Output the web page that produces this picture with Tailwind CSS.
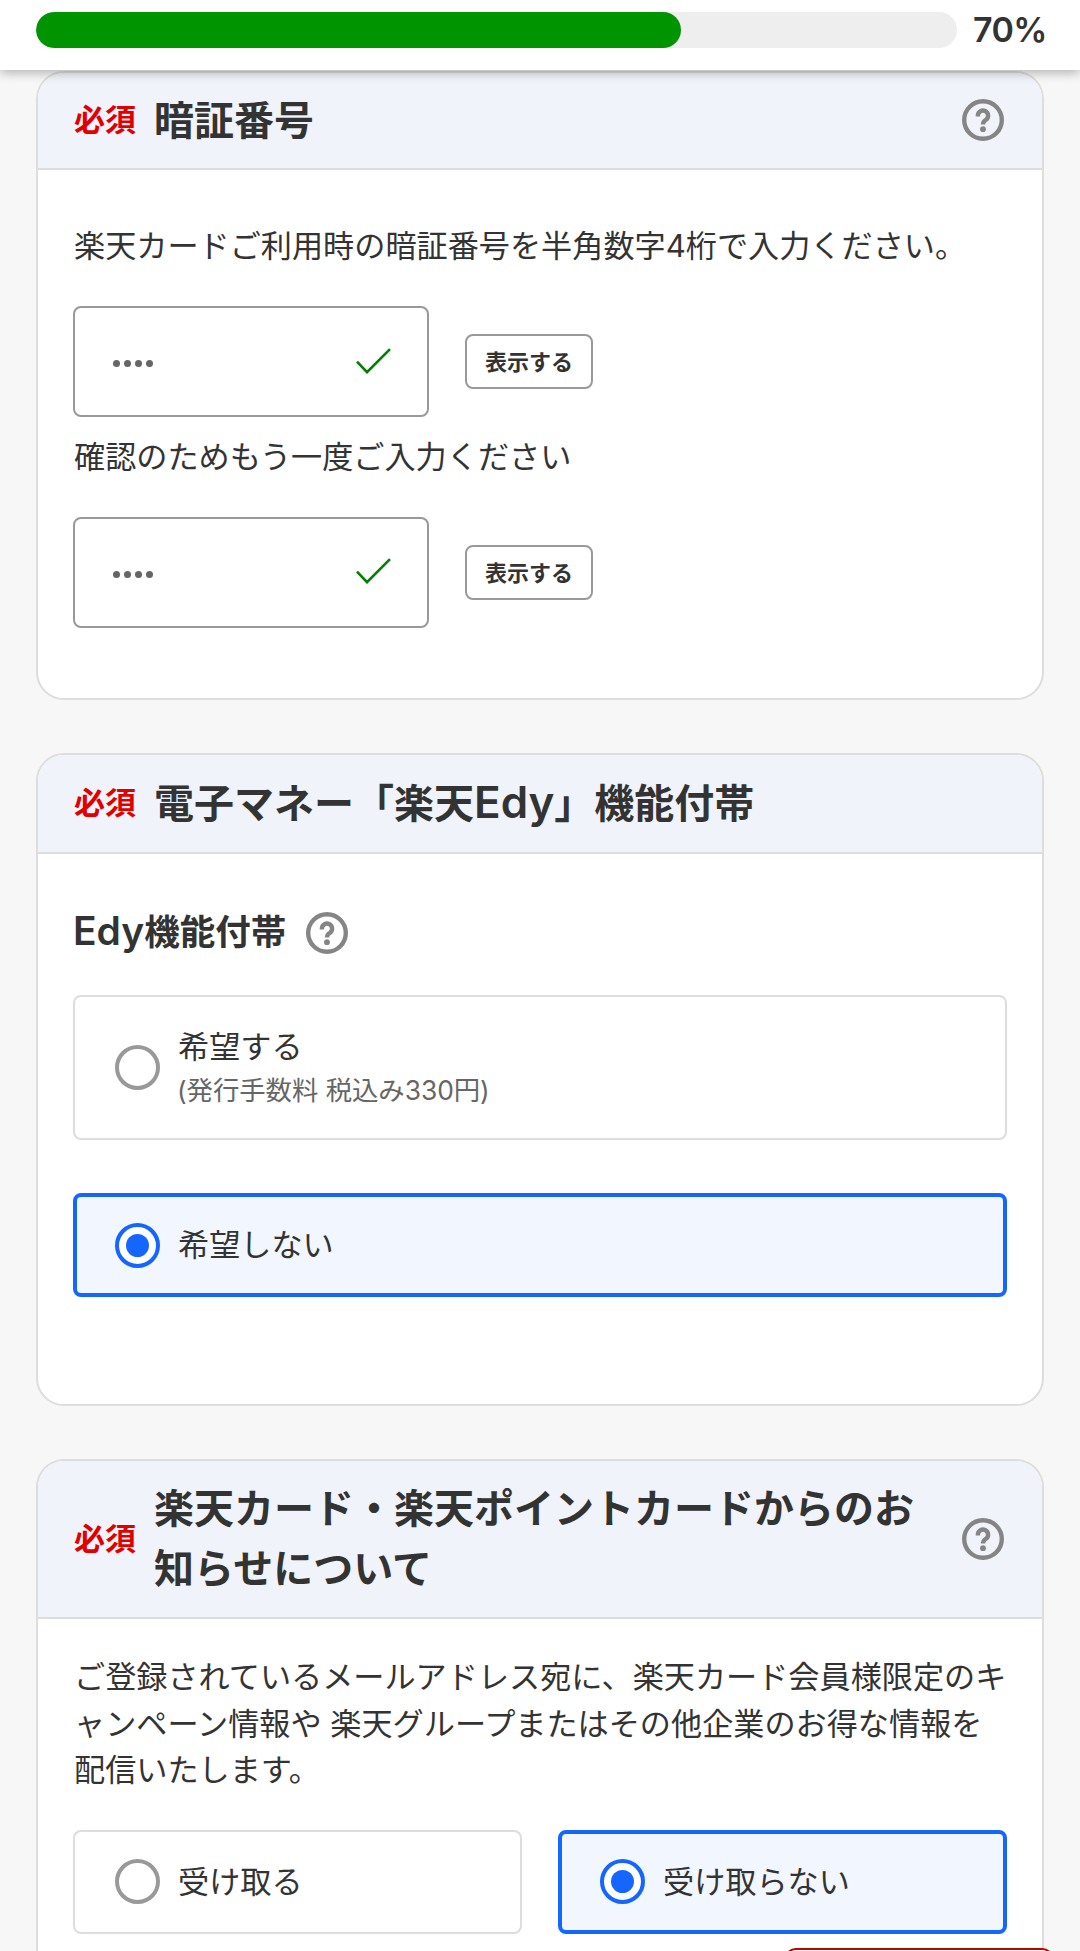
<!DOCTYPE html>
<html lang="ja">
  <head>
    <meta charset="UTF-8" />
    <meta name="viewport" content="width=device-width, initial-scale=1.0" />
    <title>楽天カード お申し込み</title>
    <script src="https://cdn.jsdelivr.net/npm/@tailwindcss/browser@4"></script>
    <style>
      body {
        font-family: 'Inter', 'Noto Sans CJK JP', sans-serif;
      }
    </style>
  </head>
  <body class="bg-[#f7f7f7] text-[#333] h-[1951px] overflow-hidden">
    <svg class="hidden">
      <symbol id="help" viewBox="0 0 42 42">
        <circle cx="21" cy="21" r="18.8" fill="none" stroke="#858585" stroke-width="4.4" />
        <path d="M15.9 17.4v-.8a5.1 5.1 0 1 1 8.4 3.9c-1.9 1.4-3.3 2-3.3 4.9" fill="none" stroke="#858585" stroke-width="4.4" />
        <circle cx="21" cy="30.2" r="2.9" fill="#858585" />
      </symbol>
      <symbol id="check" viewBox="0 0 35 26">
        <path d="M1 13.6l10 10.6L34 1.2" fill="none" stroke="#008000" stroke-width="2.6" />
      </symbol>
    </svg>

    <header class="relative z-10 bg-white h-[70px] px-9 pt-3 flex items-start shadow-[0_3px_10px_rgba(0,0,0,0.28)]">
      <div class="w-[921px] h-9 shrink-0 rounded-full bg-[#eee] overflow-hidden">
        <div class="h-full rounded-full bg-[#009500]" style="width: 70%"></div>
      </div>
      <p class="ml-4 text-[34px] leading-9 font-semibold tracking-[-0.6px]">70%</p>
    </header>

    <main class="px-9 pt-px">
      <section class="w-[1008px] h-[629px] bg-white border-2 border-[#ddd] rounded-[28px] overflow-hidden">
        <div class="h-[97px] pl-9 pr-[38px] flex items-center bg-[#f0f3f9] border-b-2 border-[#ddd]">
          <span class="pb-[3px] text-[31px] leading-none font-bold text-[#e00000]">必須</span>
          <h2 class="ml-[18px] flex-1 text-[40px] leading-[60px] font-bold">暗証番号</h2>
          <svg class="mb-[2px] w-[42px] h-[42px]"><use href="#help" /></svg>
        </div>
        <div class="px-[35px] pt-[53px]">
          <p class="pl-px text-[31.15px] leading-[46px]">楽天カードご利用時の暗証番号を半角数字4桁で入力ください。</p>
          <div class="mt-[37px] flex items-center">
            <div class="w-[356px] h-[111px] border-2 border-[#999] rounded-lg flex items-center justify-between pl-[38px] pr-9">
              <div class="flex gap-[4px] pt-[3px]">
                <i class="size-[7px] rounded-full bg-[#666]"></i><i class="size-[7px] rounded-full bg-[#666]"></i><i class="size-[7px] rounded-full bg-[#666]"></i><i class="size-[7px] rounded-full bg-[#666]"></i>
              </div>
              <svg class="mb-[2px] w-[35px] h-[26px]"><use href="#check" /></svg>
            </div>
            <button class="ml-9 w-[128px] h-[55px] border-2 border-[#999] rounded-lg text-[22px] leading-none font-bold">表示する</button>
          </div>
          <p class="mt-[17px] pl-px text-[31.15px] leading-[46px]">確認のためもう一度ご入力ください</p>
          <div class="mt-[37px] flex items-center">
            <div class="w-[356px] h-[111px] border-2 border-[#999] rounded-lg flex items-center justify-between pl-[38px] pr-9">
              <div class="flex gap-[4px] pt-[3px]">
                <i class="size-[7px] rounded-full bg-[#666]"></i><i class="size-[7px] rounded-full bg-[#666]"></i><i class="size-[7px] rounded-full bg-[#666]"></i><i class="size-[7px] rounded-full bg-[#666]"></i>
              </div>
              <svg class="mb-[3px] w-[35px] h-[26px]"><use href="#check" /></svg>
            </div>
            <button class="ml-9 w-[128px] h-[55px] border-2 border-[#999] rounded-lg text-[22px] leading-none font-bold">表示する</button>
          </div>
        </div>
      </section>

      <section class="mt-[53px] w-[1008px] h-[653px] bg-white border-2 border-[#ddd] rounded-[28px] overflow-hidden">
        <div class="h-[99px] pl-9 pr-[38px] flex items-center bg-[#f0f3f9] border-b-2 border-[#ddd]">
          <span class="pb-[3px] text-[31px] leading-none font-bold text-[#e00000]">必須</span>
          <h2 class="ml-[18px] flex-1 text-[40px] leading-[60px] font-bold">電子マネー「楽天<span class="text-[44px] leading-none font-semibold">Edy</span>」機能付帯</h2>
        </div>
        <div class="px-[35px] pt-[52px]">
          <div class="flex items-center h-[54px]">
            <h3 class="text-[35.5px] leading-[54px] font-bold"><span class="text-[39px] leading-none font-semibold">Edy</span>機能付帯</h3>
            <svg class="ml-5 w-[42px] h-[42px]"><use href="#help" /></svg>
          </div>
          <label class="mt-[35px] h-[145px] w-[934px] flex items-center border-2 border-[#ddd] rounded-lg pl-[40px]">
            <span class="size-[45px] rounded-full border-4 border-[#999] bg-white"></span>
            <span class="ml-[18px] pb-[2px]">
              <span class="block text-[31.15px] leading-[46px]">希望する</span>
              <span class="block -ml-px text-[26.4px] leading-[40px] tracking-[-0.05px] text-[#666]">(発行手数料 税込み330円)</span>
            </span>
          </label>
          <label class="mt-[53px] h-[104px] w-[934px] flex items-center border-4 border-[#1565ff] bg-[#f2f6ff] rounded-lg pl-[38px]">
            <span class="size-[45px] rounded-full border-4 border-[#1565ff] bg-white flex items-center justify-center"><span class="size-[23px] rounded-full bg-[#1565ff]"></span></span>
            <span class="ml-[18px] text-[31.15px] leading-[46px]">希望しない</span>
          </label>
        </div>
      </section>

      <section class="mt-[53px] w-[1008px] h-[492px] bg-white border-2 border-b-0 border-[#ddd] rounded-t-[28px] overflow-hidden">
        <div class="h-[158px] pl-9 pr-[38px] flex items-center bg-[#f0f3f9] border-b-2 border-[#ddd]">
          <span class="pb-[2px] text-[31px] leading-none font-bold text-[#e00000]">必須</span>
          <h2 class="ml-[18px] flex-1 text-[40px] leading-[60px] font-bold whitespace-nowrap">楽天カード・楽天ポイントカードからのお<br />知らせについて</h2>
          <svg class="w-[42px] h-[42px]"><use href="#help" /></svg>
        </div>
        <div class="px-[35px] pt-[35px]">
          <p class="pl-px text-[31.15px] leading-[46.6px] whitespace-nowrap">ご登録されているメールアドレス宛に、楽天カード会員様限定のキ<br />ャンペーン情報や 楽天グループまたはその他企業のお得な情報を<br />配信いたします。</p>
          <div class="mt-9 w-[934px] grid grid-cols-2 gap-9">
            <label class="h-[104px] flex items-center border-2 border-[#ddd] rounded-lg pl-[40px]">
              <span class="size-[45px] rounded-full border-4 border-[#999] bg-white"></span>
              <span class="ml-[18px] text-[31.15px] leading-[46px]">受け取る</span>
            </label>
            <label class="h-[104px] flex items-center border-4 border-[#1565ff] bg-[#f2f6ff] rounded-lg pl-[38px]">
              <span class="size-[45px] rounded-full border-4 border-[#1565ff] bg-white flex items-center justify-center"><span class="size-[23px] rounded-full bg-[#1565ff]"></span></span>
              <span class="ml-[18px] text-[31.15px] leading-[46px]">受け取らない</span>
            </label>
          </div>
        </div>
      </section>
    </main>

    <!-- floating button, peeks in at the bottom edge -->
    <div class="absolute left-[784px] top-[1948px] w-[270px] h-[3px] overflow-hidden">
      <div class="h-20 rounded-xl border-2 border-[#bf0000] bg-white"></div>
    </div>
  </body>
</html>
